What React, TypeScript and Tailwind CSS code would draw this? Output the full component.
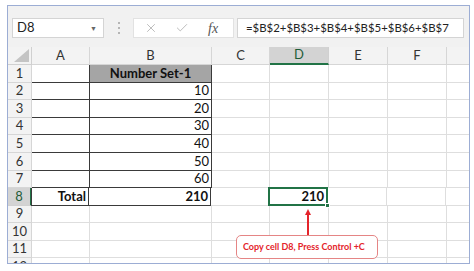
import { Check, X } from "lucide-react";

const font = { fontFamily: "Lato, 'Open Sans', sans-serif" };

const cols = [
  { key: "A", w: "w-[58px]" },
  { key: "B", w: "w-[122px]" },
  { key: "C", w: "w-[58px]" },
  { key: "D", w: "w-[59px]" },
  { key: "E", w: "w-[59px]" },
  { key: "F", w: "w-[59px]" },
];

const values: Record<number, string> = { 2: "10", 3: "20", 4: "30", 5: "40", 6: "50", 7: "60" };

const rowH = ["h-[18px]", "h-[17px]", "h-[18px]", "h-[17px]", "h-[18px]", "h-[18px]", "h-[17px]", "h-[18px]", "h-[17px]", "h-[18px]", "h-[17px]", "h-[18px]"];

const Cell = ({ row, col }: { row: number; col: string }) => {
  const w = cols.find((c) => c.key === col)!.w;
  const inTable = row <= 8 && (col === "A" || col === "B");
  const border = inTable
    ? "border-r border-b border-[#3a3a3a]"
    : "border-r border-b border-[#dedede]";

  if (col === "B" && row === 1) {
    return (
      <div className={`${w} ${border} bg-[#a5a5a5] flex items-center justify-center font-bold text-[13px] text-[#111]`}>
        Number Set-1
      </div>
    );
  }
  if (col === "B" && values[row]) {
    return (
      <div className={`${w} ${border} flex items-center justify-end pr-[2px] text-[13px] text-[#111]`}>
        {values[row]}
      </div>
    );
  }
  if (row === 8 && col === "A") {
    return (
      <div className={`${w} ${border} border-l border-l-[#3a3a3a] -ml-px flex items-center justify-end pr-[2px] font-bold text-[13px] text-[#111]`}>
        Total
      </div>
    );
  }
  if (row === 8 && col === "B") {
    return (
      <div className={`${w} ${border} flex items-center justify-end pr-[2px] font-bold text-[13px] text-[#111]`}>
        210
      </div>
    );
  }
  if (row === 8 && col === "D") {
    return (
      <div className={`${w} ${border} relative flex items-center justify-end pr-[3px] font-bold text-[13px] text-[#111]`}>
        210
        {/* selection */}
        <div className="absolute -left-px -top-px -right-px -bottom-px border-2 border-[#217346]" />
        <div className="absolute -right-[3px] -bottom-[3px] w-[5px] h-[5px] bg-[#217346] border border-white" />
      </div>
    );
  }
  return <div className={`${w} ${border}`} />;
};

export default function App() {
  const rows = [1, 2, 3, 4, 5, 6, 7, 8, 9, 10, 11, 12];
  return (
    <div className="w-[474px] h-[271px] bg-white pt-[5px] pl-[7px]" style={font}>
      <div className="w-[463px] h-[259px] border border-[#9cadd4] overflow-hidden flex flex-col relative">
        {/* Formula bar */}
        <div className="h-[41px] bg-[#f1f1f1] flex items-start pt-[12px] pl-[4px] shrink-0">
          <div className="w-[92px] h-[20px] bg-white border border-[#d4d4d4] flex items-center justify-between pl-[4px] pr-[6px]">
            <span className="text-[13px] text-[#222]">D8</span>
            <span className="text-[7px] text-[#666]">▼</span>
          </div>
          <div className="w-[29px] h-[20px] flex flex-col items-center justify-center gap-[3px]">
            <span className="w-[2px] h-[2px] bg-[#b5b5b5]" />
            <span className="w-[2px] h-[2px] bg-[#b5b5b5]" />
            <span className="w-[2px] h-[2px] bg-[#b5b5b5]" />
          </div>
          <div className="w-[101px] h-[20px] bg-white border border-[#e2e2e2] flex items-center pl-[10px]">
            <X size={14} strokeWidth={1.3} className="text-[#a8a8a8]" />
            <Check size={14} strokeWidth={1.3} className="text-[#a8a8a8] ml-[17px]" />
            <span className="ml-[19px] text-[14px] italic text-[#555]" style={{ fontFamily: "'Liberation Serif', serif" }}>
              fx
            </span>
          </div>
          <div className="w-[227px] h-[20px] ml-[3px] bg-white border border-[#d4d4d4] flex items-center pl-[8px] text-[11.4px] text-[#222] whitespace-nowrap overflow-hidden">
            =$B$2+$B$3+$B$4+$B$5+$B$6+$B$7
          </div>
        </div>

        {/* Column headers */}
        <div className="flex h-[18px] shrink-0 bg-[#f3f3f3]">
          <div className="w-[24px] border-r border-b border-[#d0d0d0] flex items-end justify-end pr-[2px] pb-[2px]">
            <div className="w-0 h-0 border-l-[15px] border-l-transparent border-b-[13px] border-b-[#c4c4c4]" />
          </div>
          {cols.map((c) => (
            <div
              key={c.key}
              className={`${c.w} flex items-center justify-center text-[13px] ${
                c.key === "D"
                  ? "bg-[#d3d3d3] text-[#1e5c37] border-r border-[#d0d0d0] border-b-2 border-b-[#217346]"
                  : "text-[#333] border-r border-b border-[#d6d6d6]"
              }`}
            >
              {c.key}
            </div>
          ))}
          <div className="flex-1 border-b border-[#d6d6d6]" />
        </div>

        {/* Rows */}
        {rows.map((r, i) => (
          <div key={r} className={`flex ${rowH[i]} shrink-0`}>
            <div
              className={`w-[24px] flex items-center justify-center text-[13px] border-b ${
                r === 8
                  ? "bg-[#d3d3d3] text-[#1e5c37] border-r-2 border-r-[#217346] border-b-[#d0d0d0]"
                  : "bg-[#f3f3f3] text-[#333] border-r border-[#d6d6d6]"
              }`}
            >
              {r}
            </div>
            {cols.map((c) => (
              <Cell key={c.key} row={r} col={c.key} />
            ))}
            <div className="flex-1 border-b border-[#dedede]" />
          </div>
        ))}

        {/* Arrow */}
        <div className="absolute left-[296px] top-[203px] w-[8px] h-[27px] flex flex-col items-center">
          <div className="w-0 h-0 border-l-[3px] border-l-transparent border-r-[3px] border-r-transparent border-b-[6px] border-b-[#e4242b]" />
          <div className="w-[1.5px] flex-1 bg-[#e4242b]" />
        </div>

        {/* Callout */}
        <div className="absolute left-[228px] top-[229px] w-[142px] h-[24px] bg-white border-[1.5px] border-[#e58585] rounded-[5px] flex items-center pl-[6px]">
          <span className="text-[9px] font-bold text-[#e4242b]">Copy cell D8, Press Control +C</span>
        </div>
      </div>
    </div>
  );
}
